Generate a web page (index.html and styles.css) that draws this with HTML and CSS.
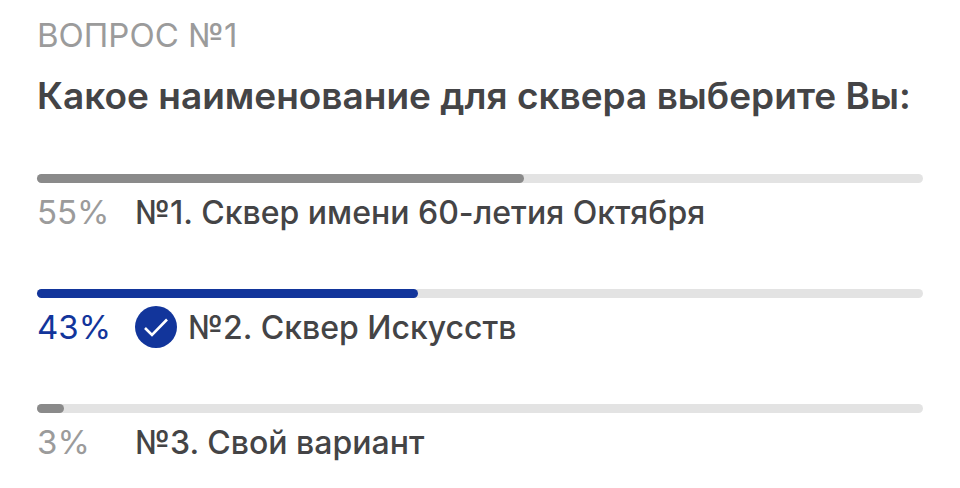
FILE: index.html
```html
<!DOCTYPE html>
<html lang="ru">
<head>
<meta charset="utf-8">
<meta name="viewport" content="width=device-width, initial-scale=1">
<title>Вопрос №1</title>
<link rel="stylesheet" href="styles.css">
</head>
<body>
<main class="poll">
  <p class="poll-label">ВОПРОС №1</p>
  <h1 class="poll-title">Какое наименование для сквера выберите Вы:</h1>
  <ul class="options">
    <li class="option">
      <div class="track"><div class="fill" style="width: 55%"></div></div>
      <div class="row"><span class="percent">55%</span><span class="name">№1. Сквер имени 60-летия Октября</span></div>
    </li>
    <li class="option selected">
      <div class="track"><div class="fill" style="width: 43%"></div></div>
      <div class="row"><span class="percent">43%</span><svg class="check" viewBox="0 0 42 42" aria-hidden="true"><circle cx="21" cy="21" r="21" fill="#12359b"/><path d="M10 22l7 7 15-15.500" fill="none" stroke="#fff" stroke-width="2.600"/></svg><span class="name">№2. Сквер Искусств</span></div>
    </li>
    <li class="option">
      <div class="track"><div class="fill" style="width: 3%"></div></div>
      <div class="row"><span class="percent">3%</span><span class="name">№3. Свой вариант</span></div>
    </li>
  </ul>
</main>
</body>
</html>
```
FILE: styles.css
```css
* { box-sizing: border-box; }
body {
  margin: 0;
  background: #fff;
  color: #444446;
  font-family: Inter, "Liberation Sans", sans-serif;
}
.poll { padding: 15px 37px 0; }
.poll-label {
  margin: 0;
  color: #9b9b9b;
  font-size: 33px;
  line-height: 40px;
}
.poll-title {
  margin: 17px 0 0;
  font-size: 37px;
  font-weight: 600;
  line-height: 48px;
}
.options {
  display: flex;
  flex-direction: column;
  gap: 48px;
  margin: 54px 0 0;
  padding: 0;
  list-style: none;
}
.track {
  height: 9px;
  border-radius: 5px;
  background: #e3e3e3;
}
.fill {
  height: 100%;
  border-radius: 5px;
  background: #8a8a8a;
}
.row {
  display: flex;
  align-items: center;
  height: 58px;
}
.percent {
  flex: 0 0 98px;
  color: #9b9b9b;
  font-size: 33px;
}
.name {
  font-size: 32px;
  font-weight: 500;
}
.check {
  flex: none;
  width: 42px;
  height: 42px;
  margin-right: 11px;
}
.selected .fill { background: #12359b; }
.selected .percent { color: #12359b; }
```
